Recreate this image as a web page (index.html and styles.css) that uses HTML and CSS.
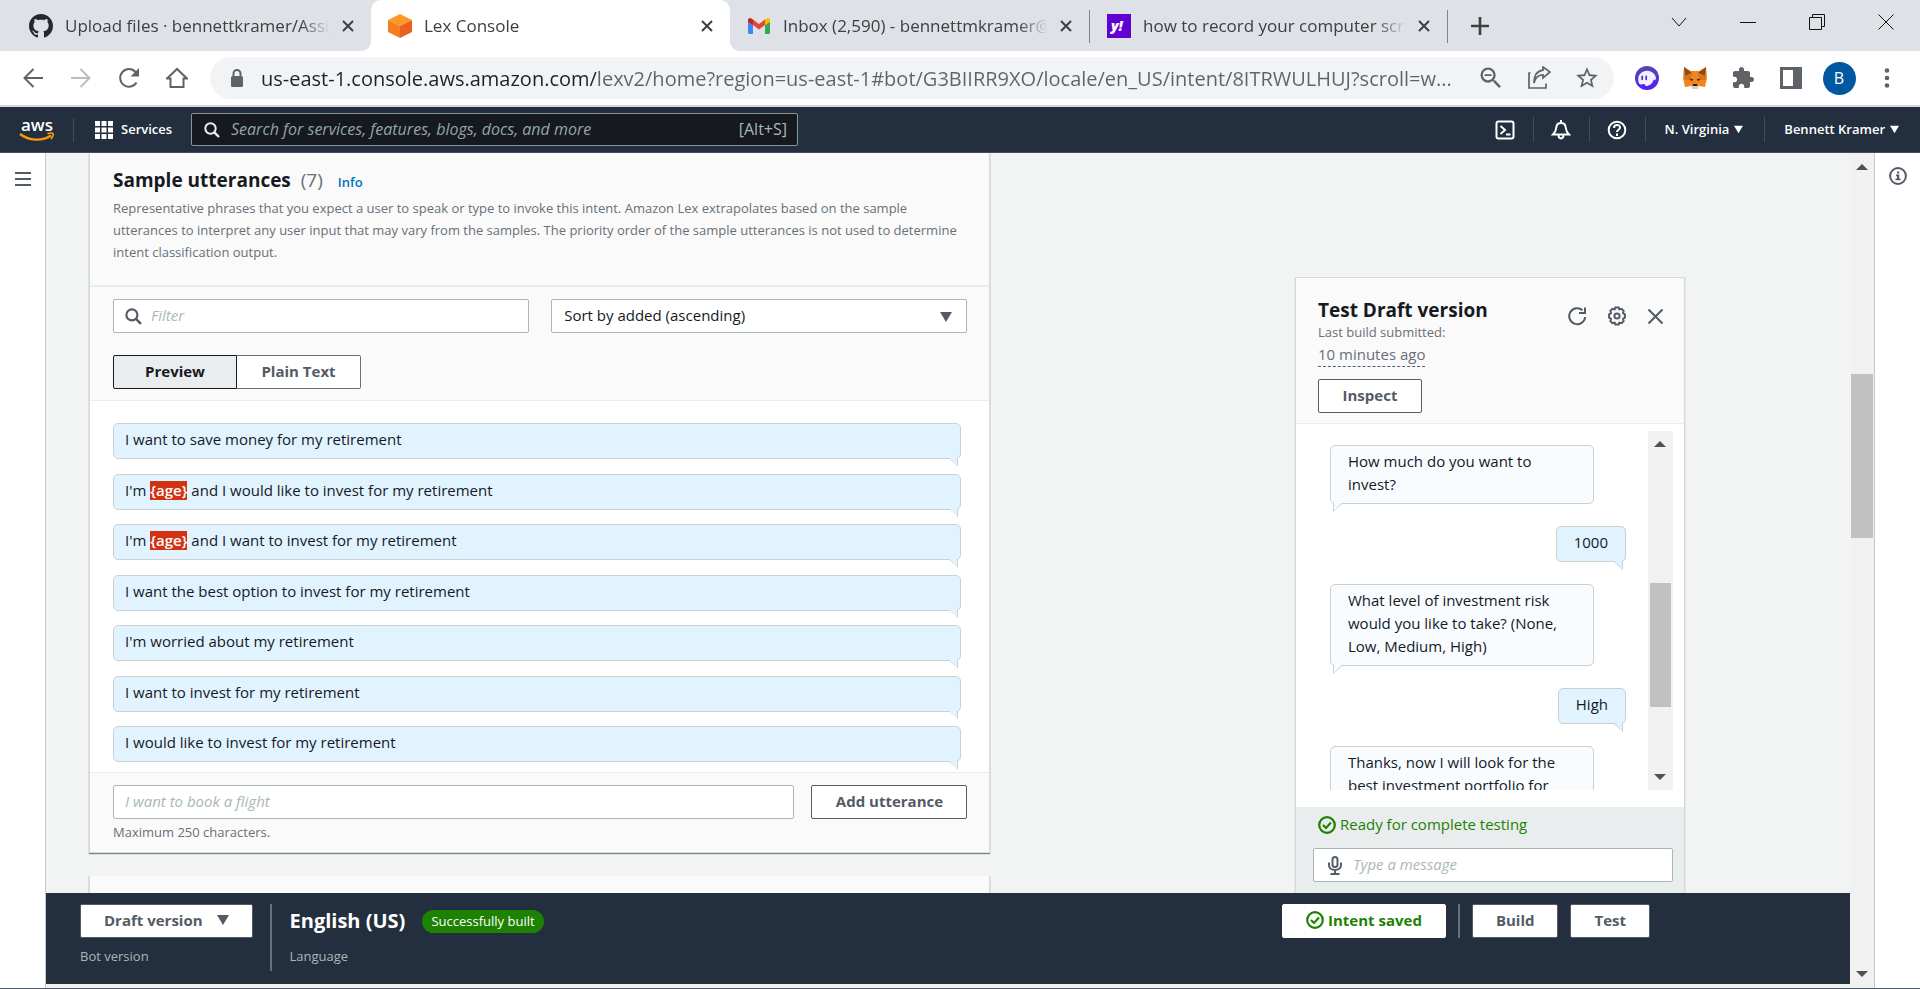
FILE: index.html
```html
<!DOCTYPE html>
<html lang="en">
<head>
<meta charset="utf-8">
<title>Lex Console</title>
<link rel="stylesheet" href="styles.css">
</head>
<body>
<svg class="defs" aria-hidden="true">
  <symbol id="i-close" viewBox="0 0 12 12"><path d="M1 1l10 10M11 1L1 11" fill="none" stroke="currentColor" stroke-width="2"/></symbol>
  <symbol id="i-x" viewBox="0 0 17 17"><path d="M1.500 1.500l14 14M15.500 1.500l-14 14" fill="none" stroke="currentColor" stroke-width="2"/></symbol>
  <symbol id="i-search" viewBox="0 0 16 16"><circle cx="6.5" cy="6.5" r="5.2" fill="none" stroke="currentColor" stroke-width="2"/><path d="M10.3 10.3L15 15" stroke="currentColor" stroke-width="2.4"/></symbol>
  <symbol id="i-caret" viewBox="0 0 12 10"><path d="M0 0h12L6 10z" fill="currentColor"/></symbol>
  <symbol id="i-scroll" viewBox="0 0 12 6"><path d="M0 6h12L6 0z" fill="#505050"/></symbol>
  <symbol id="i-check" viewBox="0 0 18 18"><circle cx="9" cy="9" r="7.8" fill="none" stroke="currentColor" stroke-width="2.2"/><path d="M5 9l3 3 5-5.4" fill="none" stroke="currentColor" stroke-width="2.2"/></symbol>
</svg>

<div class="window">
  <div class="tabstrip">
    <div class="tab">
      <svg class="favicon" viewBox="0 0 16 16"><path fill="#24292f" d="M8 0C3.58 0 0 3.58 0 8c0 3.54 2.29 6.53 5.47 7.59.4.07.55-.17.55-.38 0-.19-.01-.82-.01-1.49-2.01.37-2.53-.49-2.69-.94-.09-.23-.48-.94-.82-1.13-.28-.15-.68-.52-.01-.53.63-.01 1.08.58 1.23.82.72 1.21 1.87.87 2.33.66.07-.52.28-.87.51-1.07-1.78-.2-3.64-.89-3.64-3.95 0-.87.31-1.59.82-2.15-.08-.2-.36-1.02.08-2.12 0 0 .67-.21 2.2.82.64-.18 1.32-.27 2-.27.68 0 1.36.09 2 .27 1.53-1.04 2.2-.82 2.2-.82.44 1.1.16 1.92.08 2.12.51.56.82 1.27.82 2.15 0 3.07-1.87 3.75-3.65 3.95.29.25.54.73.54 1.48 0 1.07-.01 1.93-.01 2.2 0 .21.15.46.55.38A8.013 8.013 0 0016 8c0-4.42-3.58-8-8-8z"/></svg>
      <button class="tab-title">Upload files · bennettkramer/Assignment</button>
      <button class="tab-close" aria-label="Close tab"><svg><use href="#i-close"/></svg></button>
    </div>
    <div class="tab tab-active">
      <svg class="favicon" viewBox="0 0 24 24"><path fill="#fd9827" d="M12 0l12 6-12 6L0 6z"/><path fill="#f47d20" d="M0 6l12 6v12L0 18z"/><path fill="#e8601f" d="M24 6l-12 6v12l12-6z"/></svg>
      <button class="tab-title">Lex Console</button>
      <button class="tab-close" aria-label="Close tab"><svg><use href="#i-close"/></svg></button>
    </div>
    <div class="tab">
      <svg class="favicon" viewBox="0 0 24 24"><path fill="#4285f4" d="M1 7l5 4v9H2.500Q1 20 1 18.500z"/><path fill="#34a853" d="M23 7l-5 4v9h3.500q1.500 0 1.500-1.500z"/><path fill="#ea4335" d="M6 5.500l6 4.500 6-4.500V11l-6 4.500L6 11z"/><path fill="#c5221f" d="M1 8V6q0-2 2-2 1 0 3 1.500V11z"/><path fill="#fbbc04" d="M23 8V6q0-2-2-2-1 0-3 1.500V11z"/></svg>
      <button class="tab-title">Inbox (2,590) - bennettmkramer@gmail.com</button>
      <button class="tab-close" aria-label="Close tab"><svg><use href="#i-close"/></svg></button>
    </div>
    <div class="tab tab-ruled">
      <svg class="favicon" viewBox="0 0 24 24"><path fill="#5f01d1" d="M0 0h24v24H0z"/><text x="4" y="17" class="yahoo">y!</text></svg>
      <button class="tab-title">how to record your computer screen</button>
      <button class="tab-close" aria-label="Close tab"><svg><use href="#i-close"/></svg></button>
    </div>
    <button class="new-tab" aria-label="New tab"><svg width="18" height="18" viewBox="0 0 18 18"><path d="M9 0v18M0 9h18" stroke="#3c4043" stroke-width="2.600"/></svg></button>
    <div class="window-controls">
      <button aria-label="Search tabs"><svg width="16" height="10" viewBox="0 0 16 10"><path d="M1 1l7 8 7-8"/></svg></button>
      <button aria-label="Minimize"><svg width="16" height="16" viewBox="0 0 16 16"><path d="M0 8.500h16"/></svg></button>
      <button aria-label="Restore"><svg width="16" height="16" viewBox="0 0 16 16"><path d="M.5 3.500h12v12H.500zM3.500 3.500v-3h12v12h-3"/></svg></button>
      <button aria-label="Close"><svg width="16" height="16" viewBox="0 0 16 16"><path d="M.5.5l15 15M15.500.5l-15 15"/></svg></button>
    </div>
  </div>

  <div class="toolbar">
    <button class="tool" aria-label="Back"><svg width="20" height="20" viewBox="0 0 20 20"><path d="M20 10H2M10.500 1L1.500 10l9 9" class="line"/></svg></button>
    <button class="tool tool-off" aria-label="Forward"><svg width="20" height="20" viewBox="0 0 20 20"><path d="M0 10h18M9.500 1l9 9-9 9" class="line"/></svg></button>
    <button class="tool" aria-label="Reload"><svg width="22" height="22" viewBox="0 0 22 22"><path d="M18.500 15.500A8.800 8.800 0 1 1 17.500 5" class="line"/><path d="M21 1v8.500h-8.500z" fill="currentColor"/></svg></button>
    <button class="tool" aria-label="Home"><svg width="22" height="22" viewBox="0 0 22 22"><path d="M1 11.500L11 2l10 9.500h-3.500V20h-13v-8.500z" class="line"/></svg></button>
    <div class="omnibox">
      <svg width="18" height="20" viewBox="0 0 18 20"><rect x="3" y="8" width="12" height="11" rx="1.500" fill="#5f6368"/><path d="M5.500 8V5.500a3.500 3.500 0 0 1 7 0V8" fill="none" stroke="#5f6368" stroke-width="2"/></svg>
      <input class="url" type="text" aria-label="Address" value="us-east-1.console.aws.amazon.com/lexv2/home?region=us-east-1#bot/G3BIIRR9XO/locale/en_US/intent/8ITRWULHUJ?scroll=w...">
      <button class="tool" aria-label="Zoom"><svg width="28" height="28" viewBox="0 0 24 24"><path fill="currentColor" d="M15.500 14h-.79l-.28-.27A6.471 6.471 0 0016 9.500 6.500 6.500 0 109.500 16c1.610 0 3.090-.59 4.230-1.570l.27.28v.79l5 4.990L20.490 19l-4.990-5zm-6 0C7.010 14 5 11.990 5 9.500S7.010 5 9.500 5 14 7.010 14 9.500 11.990 14 9.500 14zM6.500 8.700h6v1.500h-6z"/></svg></button>
      <button class="tool" aria-label="Share"><svg width="24" height="24" viewBox="0 0 24 24"><path d="M3.500 7H2v15h17v-4.500M7 17c1-5.500 4-8 9-8.200V12l7-6-7-5v3.200C10 5 7 10 7 17z" fill="none" stroke="currentColor" stroke-width="1.700"/></svg></button>
      <button class="tool" aria-label="Bookmark"><svg width="26" height="26" viewBox="0 0 24 24"><path fill="currentColor" d="M22 9.240l-7.190-.62L12 2 9.190 8.630 2 9.240l5.460 4.730L5.820 21 12 17.270 18.180 21l-1.630-7.030L22 9.240zM12 15.400l-3.760 2.270 1-4.280-3.320-2.880 4.380-.38L12 6.100l1.710 4.040 4.380.38-3.320 2.880 1 4.280L12 15.400z"/></svg></button>
    </div>
    <button class="tool" aria-label="Phantom"><svg width="24" height="24" viewBox="0 0 24 24"><defs><linearGradient id="ph" x1="0" y1="0" x2="0" y2="1"><stop offset="0" stop-color="#534bb1"/><stop offset="1" stop-color="#551bf9"/></linearGradient></defs><circle cx="12" cy="12" r="12" fill="url(#ph)"/><path d="M3.200 13C3.200 8.500 7 4.800 12 4.800c5.200 0 9 3.700 9 8.200 0 1-1.800.4-2.600 1.200-.9 3.300-4.200 5.800-7.400 5.800-1.200 0-.8-1.800-2-1.900-1.400 0-2.400.9-3.900.2S3.200 15.500 3.200 13z" fill="#f3efff"/><path d="M7.200 10.300v3M11.200 10.300v3" stroke="#4e3ac6" stroke-width="1.800" stroke-linecap="round"/></svg></button>
    <button class="tool" aria-label="MetaMask"><svg width="24" height="24" viewBox="0 0 24 24"><path fill="#f5841f" d="M1 1l7 4h8l7-4 1 11-2 9-6-1-4 2-4-2-6 1-2-9z"/><path fill="#8a4a20" d="M1 1l8 6-7 3zM23 1l-8 6 7 3z"/><path fill="#d5761c" d="M2 10l7-3-2 7-6 0zM22 10l-7-3 2 7h6z"/><path fill="#e4c9b4" d="M8 19l4 1 4-1-1 4H9z"/><path fill="#222" d="M10 18h4l.5 2h-5zM6.500 12.500l4 1-2 1.500zM17.500 12.500l-4 1 2 1.500z"/></svg></button>
    <button class="tool" aria-label="Extensions"><svg width="24" height="24" viewBox="0 0 24 24"><path fill="currentColor" d="M20.500 11H19V7c0-1.100-.9-2-2-2h-4V3.500C13 2.120 11.880 1 10.500 1S8 2.120 8 3.500V5H4c-1.100 0-1.990.9-1.990 2v3.800H3.500c1.490 0 2.700 1.210 2.700 2.700s-1.210 2.700-2.700 2.700H2V20c0 1.100.9 2 2 2h3.800v-1.500c0-1.490 1.210-2.700 2.700-2.700 1.490 0 2.700 1.210 2.700 2.700V22H17c1.100 0 2-.9 2-2v-4h1.500c1.380 0 2.500-1.120 2.500-2.500S21.880 11 20.500 11z"/></svg></button>
    <button class="tool" aria-label="Side panel"><svg width="22" height="22" viewBox="0 0 22 22"><path fill="currentColor" fill-rule="evenodd" d="M0 0h22v22H0zM3 3v16h10V3z"/></svg></button>
    <button class="tool" aria-label="Profile"><span class="avatar">B</span></button>
    <button class="tool" aria-label="Menu"><svg width="6" height="20" viewBox="0 0 6 20"><circle cx="3" cy="2.500" r="2.300" fill="currentColor"/><circle cx="3" cy="10" r="2.300" fill="currentColor"/><circle cx="3" cy="17.500" r="2.300" fill="currentColor"/></svg></button>
  </div>

  <header class="aws-nav">
    <a class="aws-logo" href="#" aria-label="AWS home"><svg width="36" height="24" viewBox="0 0 36 24"><text x="18" y="13" text-anchor="middle" class="aws-word">aws</text><path d="M1 16c9 7 22 7.500 31 1.500" fill="none" stroke="#f90" stroke-width="2.400"/><path d="M28.500 15.800c2-1 5-1 5.500-.3s-.2 3.500-2 5.500" fill="none" stroke="#f90" stroke-width="1.700"/></svg></a>
    <button class="services"><svg width="18" height="18" viewBox="0 0 18 18"><path fill="#fff" d="M0 0h5v5H0zM6.500 0h5v5h-5zM13 0h5v5h-5zM0 6.500h5v5H0zM6.500 6.500h5v5h-5zM13 6.500h5v5h-5zM0 13h5v5H0zM6.500 13h5v5h-5zM13 13h5v5h-5z"/></svg>Services</button>
    <label class="aws-search"><svg width="16" height="16"><use href="#i-search"/></svg><input type="search" aria-label="Search AWS" placeholder="Search for services, features, blogs, docs, and more"><span>[Alt+S]</span></label>
    <nav class="aws-links">
      <button class="aws-icon" aria-label="CloudShell"><svg width="20" height="20" viewBox="0 0 20 20"><rect x="1.500" y="1.500" width="17" height="17" rx="2" /><path d="M5.500 6l4.500 4-4.500 4M11 14.500h4.500"/></svg></button>
      <button class="aws-icon" aria-label="Notifications"><svg width="20" height="20" viewBox="0 0 20 20"><path d="M2 14.500c2.500-2.500 3-4 3.300-7C5.500 4.500 7.500 3 10 3s4.500 1.500 4.700 4.500c.3 3 .8 4.500 3.300 7zM10 3V0M7.500 15c0 4.500 5 4.500 5 0"/></svg></button>
      <button class="aws-icon" aria-label="Help"><svg width="20" height="20" viewBox="0 0 20 20"><circle cx="10" cy="10" r="8.300"/><path d="M7 8c0-4 6-4 6-.5 0 2.200-3 2.300-3 4.500M10 13.500V16"/></svg></button>
      <button class="aws-menu">N. Virginia<svg width="9" height="9"><use href="#i-caret"/></svg></button>
      <button class="aws-menu">Bennett Kramer<svg width="9" height="9"><use href="#i-caret"/></svg></button>
    </nav>
  </header>

  <div class="console">
    <aside class="rail"><button aria-label="Open navigation"><svg width="16" height="14" viewBox="0 0 16 14"><path d="M0 1h16M0 7h16M0 13h16" stroke="#545b64" stroke-width="2"/></svg></button></aside>

    <div class="center">
      <main class="workspace">
        <div class="column">
          <section class="card">
            <div class="card-head">
              <h2>Sample utterances <span class="count">(7)</span> <a href="#">Info</a></h2>
              <p>Representative phrases that you expect a user to speak or type to invoke this intent. Amazon Lex extrapolates based on the sample utterances to interpret any user input that may vary from the samples. The priority order of the sample utterances is not used to determine intent classification output.</p>
            </div>
            <div class="filters">
              <label class="field"><svg width="17" height="17"><use href="#i-search"/></svg><input type="text" aria-label="Filter" placeholder="Filter"></label>
              <div class="select"><select aria-label="Sort order"><option>Sort by added (ascending)</option></select><svg width="12" height="10"><use href="#i-caret"/></svg></div>
              <div class="segments"><button class="seg seg-on">Preview</button><button class="seg">Plain Text</button></div>
            </div>
            <ul class="utterances">
              <li>I want to save money for my retirement</li>
              <li>I'm <mark>{age}</mark> and I would like to invest for my retirement</li>
              <li>I'm <mark>{age}</mark> and I want to invest for my retirement</li>
              <li>I want the best option to invest for my retirement</li>
              <li>I'm worried about my retirement</li>
              <li>I want to invest for my retirement</li>
              <li>I would like to invest for my retirement</li>
            </ul>
            <div class="card-foot">
              <div class="add-row"><label class="field"><input type="text" aria-label="New utterance" placeholder="I want to book a flight"></label><button class="btn btn-add">Add utterance</button></div>
              <small>Maximum 250 characters.</small>
            </div>
          </section>
          <section class="card card-next"></section>
        </div>

        <section class="chat">
          <div class="chat-head">
            <div class="chat-top">
              <h2>Test Draft version</h2>
              <div class="chat-tools">
                <button aria-label="Refresh"><svg width="20" height="20" viewBox="0 0 20 20"><path d="M18.200 11A8 8 0 1 1 15.500 4.200" class="line"/><path d="M18 1.500v5.500h-6" class="line"/></svg></button>
                <button aria-label="Settings"><svg width="20" height="20" viewBox="0 0 20 20"><path d="M8.300 1.500h3.400l.6 1.900 2.300-.6 2 2-.6 2.300 1.900 1.200v3.400l-1.900 1.200.6 2.300-2 2-2.300-.6-.6 1.900H8.300l-.6-1.900-2.300.6-2-2 .6-2.300-1.900-1.200V8.300L4 7.100l-.6-2.300 2-2 2.300.6z" class="line"/><circle cx="10" cy="10" r="2.600" class="line"/></svg></button>
                <button aria-label="Close"><svg width="17" height="17"><use href="#i-x"/></svg></button>
              </div>
            </div>
            <p class="built">Last build submitted:</p>
            <p><span class="ago">10 minutes ago</span></p>
            <button class="btn btn-inspect">Inspect</button>
          </div>
          <div class="chat-body">
            <div class="messages">
              <p class="msg">How much do you want to invest?</p>
              <p class="msg msg-user">1000</p>
              <p class="msg">What level of investment risk would you like to take? (None, Low, Medium, High)</p>
              <p class="msg msg-user">High</p>
              <p class="msg">Thanks, now I will look for the best investment portfolio for</p>
            </div>
            <div class="scrollbar"><svg width="12" height="6"><use href="#i-scroll"/></svg><i class="thumb"></i><svg class="down" width="12" height="6"><use href="#i-scroll"/></svg></div>
          </div>
          <div class="chat-foot">
            <p class="ready"><svg width="18" height="18"><use href="#i-check"/></svg>Ready for complete testing</p>
            <label class="field"><svg width="14" height="19" viewBox="0 0 14 19"><rect x="4.500" y="1" width="5" height="10" rx="2.500" fill="none" stroke="currentColor" stroke-width="2"/><path d="M1 6.500V9c0 6.500 12 6.500 12 0V6.500M7 14v4M2.500 18h9" fill="none" stroke="currentColor" stroke-width="2"/></svg><input type="text" aria-label="Message" placeholder="Type a message"></label>
          </div>
        </section>
      </main>

      <footer class="botbar">
        <div class="bot-version"><button class="btn">Draft version<svg width="12" height="10"><use href="#i-caret"/></svg></button><small>Bot version</small></div>
        <div class="bot-lang"><div class="lang-row"><strong>English (US)</strong><span class="badge">Successfully built</span></div><small>Language</small></div>
        <div class="bot-actions">
          <button class="btn btn-saved"><svg width="18" height="18"><use href="#i-check"/></svg>Intent saved</button>
          <i class="rule"></i>
          <button class="btn">Build</button>
          <button class="btn">Test</button>
        </div>
      </footer>
    </div>

    <div class="scrollbar scrollbar-page"><svg width="12" height="6"><use href="#i-scroll"/></svg><i class="thumb"></i><svg class="down" width="12" height="6"><use href="#i-scroll"/></svg></div>
    <aside class="help"><button aria-label="Info"><svg width="18" height="18" viewBox="0 0 18 18"><circle cx="9" cy="9" r="7.900" fill="none" stroke="#545b64" stroke-width="2"/><path d="M8 4.500h2.200v2H8zM7 7.500h3.200v4h1.300v1.800H6.500v-1.800H8V9.200H7z" fill="#545b64"/></svg></button></aside>
  </div>
</div>
</body>
</html>
```
FILE: styles.css
```css
* { box-sizing: border-box; }
body {
  margin: 0;
  font: 15px/23px "Open Sans", "Noto Sans", sans-serif;
  color: #16191f;
}
button, input, select { font: inherit; color: inherit; }
button { border: 0; padding: 0; background: none; cursor: pointer; }
h2, p, ul { margin: 0; padding: 0; }
svg { display: block; flex: none; }
.defs { position: absolute; width: 0; height: 0; }
.line { fill: none; stroke: currentColor; stroke-width: 2; }

.window { display: flex; flex-direction: column; height: 100vh; overflow: hidden; }

/* Browser tabs */
.tabstrip { display: flex; flex: none; height: 51px; padding-left: 12px; background: #dee1e6; color: #3c4043; }
.tab { display: flex; align-items: center; flex: 0 1 359px; min-width: 0; padding: 0 13px 0 17px; }
.tab-active { position: relative; background: #fff; border-radius: 10px 10px 0 0; }
.tab-active::before, .tab-active::after {
  content: ""; position: absolute; bottom: 0; width: 10px; height: 10px;
}
.tab-active::before { right: 100%; background: radial-gradient(circle at 0 0, transparent 10px, #fff 10px); }
.tab-active::after { left: 100%; background: radial-gradient(circle at 100% 0, transparent 10px, #fff 10px); }
.tab-ruled { border: solid #80868b; border-width: 0 1px; border-image: linear-gradient(transparent 11px, #80868b 11px, #80868b 42px, transparent 42px) 1; }
.favicon { width: 24px; height: 24px; }
.yahoo { font: italic 800 14px "Open Sans", sans-serif; fill: #fff; }
.tab-title {
  flex: 1; min-width: 0; margin-left: 12px; overflow: hidden; white-space: nowrap; text-align: left;
  font-size: 17px;
  mask-image: linear-gradient(to left, transparent, #000 30px);
}
.tab-close { display: grid; place-items: center; width: 20px; height: 20px; margin-left: 8px; }
.tab-close svg { width: 12px; height: 12px; }
.new-tab { display: grid; place-items: center; width: 64px; }
.window-controls { display: flex; margin-left: auto; }
.window-controls button { display: grid; place-items: center; width: 69px; height: 43px; }
.window-controls path { fill: none; stroke: #111; }

/* Browser toolbar */
.toolbar { display: flex; align-items: center; flex: none; height: 56px; padding: 0 9px; border-bottom: 2px solid #d6d8da; background: #fff; }
.tool { display: grid; place-items: center; flex: none; width: 48px; height: 40px; color: #5f6368; }
.tool-off { color: #babcbe; }
.omnibox { display: flex; align-items: center; flex: 1; min-width: 0; height: 42px; margin: 0 9px; padding: 0 3px 0 18px; border-radius: 21px; background: #f1f3f4; }
.url {
  flex: 1; min-width: 0; height: 40px; margin-left: 15px; border: 0; padding: 0; outline: 0;
  font-size: 20px;
  background: linear-gradient(to right, #202124 335px, #5f6368 335px);
  -webkit-background-clip: text; background-clip: text; -webkit-text-fill-color: transparent;
}
.avatar { display: grid; place-items: center; width: 33px; height: 33px; border-radius: 50%; background: #0158a0; color: #fff; font-size: 16px; }

/* AWS navigation */
.aws-nav { display: flex; align-items: center; flex: none; height: 46px; padding-left: 19px; border-bottom: 1px solid #414d5c; background: #232f3e; color: #fff; font-size: 13px; font-weight: 600; }
.aws-logo { padding-right: 18px; border-right: 1px solid #414d5c; }
.aws-word { font: 600 17px "Open Sans", sans-serif; fill: #fff; }
.services { display: flex; align-items: center; gap: 8px; width: 96px; margin-left: 21px; }
.aws-search { display: flex; align-items: center; flex: 0 1 607px; height: 33px; padding: 0 10px 0 12px; border: 1px solid #879596; border-radius: 2px; background: #16191f; font-size: 16px; font-weight: 400; color: #aab7b8; }
.aws-search svg { color: #eaeded; }
.aws-search input { flex: 1; min-width: 0; margin-left: 11px; padding: 0; border: 0; outline: 0; background: none; }
::placeholder { color: #aab7b8; font-style: italic; opacity: 1; }
.aws-search ::placeholder { color: #95a5a6; }
.aws-links { display: flex; margin-left: auto; }
.aws-links button { display: flex; align-items: center; height: 25px; }
.aws-icon { justify-content: center; width: 56px; }
.aws-icon svg { fill: none; stroke: #fff; stroke-width: 2; }
.aws-links button + button { border-left: 1px solid #414d5c; }
.aws-menu { gap: 5px; padding: 0 21px 0 19px; }

/* Console frame */
.console { display: flex; flex: 1; min-height: 0; border-bottom: 1px solid #545b64; }
.rail, .help { flex: none; width: 46px; background: #fff; }
.rail { border-right: 1px solid #c6c9cc; padding: 16px 15px; }
.help { border-left: 1px solid #c6c9cc; padding: 14px; }
.center { display: flex; flex-direction: column; flex: 1; min-width: 0; padding-bottom: 4px; background: #f1f1f1; }
.workspace {
  display: grid; grid-template: minmax(0, 1fr) / 74fr 25fr 390px; flex: 1; min-height: 0;
  padding: 0 165px 0 43px; overflow: hidden; background: #f2f3f3;
}
.scrollbar { display: flex; flex-direction: column; align-items: center; flex: none; width: 25px; padding: 10px 2px; background: #f1f1f1; }
.scrollbar .thumb { width: 100%; height: 124px; margin-top: 136px; background: #c1c1c1; }
.scrollbar .down { margin-top: auto; transform: rotate(180deg); }
.scrollbar-page { width: 24px; padding: 11px 1px; }
.scrollbar-page .thumb { height: 164px; margin-top: 204px; }

/* Sample utterances */
.card { border: 1px solid #d5dbdb; border-top: 0; background: #fafafa; box-shadow: 0 1px 1px rgba(0, 28, 36, .5); }
.card-head { padding: 15px 22px 22px 23px; border-bottom: 2px solid #eaeded; }
h2 { font-size: 19px; line-height: 24px; font-weight: 700; }
.card-head .count { margin: 0 10px 0 5px; font-weight: 400; color: #687078; }
.card-head a { font-size: 13px; font-weight: 600; color: #0073bb; text-decoration: none; }
.card-head p { margin-top: 3px; font-size: 13px; color: #687078; line-height: 22px; }
small { font-size: 13px; line-height: 20px; color: #687078; }
.filters { display: grid; grid-template-columns: 1fr 1fr; gap: 22px; padding: 12px 22px 11px 23px; border-bottom: 1px solid #eaeded; }
.field { display: flex; align-items: center; gap: 9px; height: 34px; padding: 0 11px; border: 1px solid #aab7b8; border-radius: 2px; background: #fff; color: #545b64; }
.field input { flex: 1; min-width: 0; padding: 0 0 2px; border: 0; outline: 0; background: none; }
.select { position: relative; }
.select select { width: 100%; height: 34px; padding: 0 12px 2px; border: 1px solid #aab7b8; border-radius: 2px; background: #fff; appearance: none; }
.select svg { position: absolute; right: 15px; top: 13px; color: #545b64; pointer-events: none; }
.segments { display: flex; }
.seg { width: 124px; height: 34px; padding-bottom: 2px; border: 1px solid #687078; border-radius: 0 2px 2px 0; background: #fff; color: #545b64; font-weight: 700; }
.seg-on { border-color: #16191f; border-radius: 2px 0 0 2px; background: #eaeded; color: #16191f; }
.seg + .seg { border-left: 0; }
.utterances { display: flex; flex-direction: column; justify-content: space-between; min-height: 371px; padding: 22px 28px 10px 23px; list-style: none; background: #fff; }
.utterances li, .msg { position: relative; padding: 4px 11px 7px; border: 1px solid #ccd0d3; border-radius: 5px; background: #e1f3ff; }
.utterances mark { display: inline-block; line-height: 19px; background: #d13212; color: #fff; font-weight: 600; }
.utterances li::after, .msg::after {
  content: ""; position: absolute; right: 2px; bottom: -9px; width: 9px; height: 9px;
  background: linear-gradient(to top right, transparent 48%, #ccd0d3 48%, #ccd0d3 58%, #e1f3ff 58%);
  border-right: 1px solid #ccd0d3;
  clip-path: polygon(0 0, 100% 0, 100% 100%);
}
.card-foot { padding: 12px 22px 9px 23px; border-top: 1px solid #eaeded; }
.add-row { display: flex; gap: 17px; margin-bottom: 1px; }
.add-row .field { flex: 1; }
.btn { display: flex; align-items: center; justify-content: center; gap: 14px; height: 34px; padding: 0 23px 2px; border: 1px solid #545b64; border-radius: 2px; background: #fff; color: #545b64; font-weight: 700; white-space: nowrap; }
.btn-add { width: 156px; }
.card-next { height: 60px; margin-top: 23px; }

/* Test chat */
.chat { display: flex; flex-direction: column; grid-column: 3; min-height: 0; margin-top: 124px; border: 1px solid #d5dbdb; border-bottom: 0; background: #fff; box-shadow: 0 1px 1px rgba(0, 28, 36, .3); }
.chat-head { padding: 20px 20px 10px 22px; border-bottom: 1px solid #eaeded; background: #fafafa; color: #687078; }
.chat h2 { color: #16191f; }
.chat-top { display: flex; justify-content: space-between; height: 24px; }
.chat-tools { display: flex; gap: 20px; padding-top: 8px; color: #545b64; }
.chat-tools button { display: grid; place-items: center; height: 20px; }
.built { font-size: 13px; line-height: 20px; }
.ago { display: inline-block; line-height: 24px; border-bottom: 1px dashed #545b64; }
.btn-inspect { width: 104px; margin-top: 12px; }
.chat-body { display: flex; flex: 1; min-height: 0; margin: 7px 11px 17px 34px; }
.messages { display: flex; flex-direction: column; align-items: flex-start; flex: 1; gap: 22px; padding: 14px 22px 0 0; overflow: hidden; }
.msg { flex: none; width: 264px; padding: 4px 17px 7px; background: #f8fcff; }
.msg-user { align-self: flex-end; width: auto; background: #e1f3ff; }
.msg::after { right: auto; left: 2px; border: 0; border-left: 1px solid #ccd0d3; background: linear-gradient(to top left, transparent 48%, #ccd0d3 48%, #ccd0d3 58%, #f8fcff 58%); clip-path: polygon(0 0, 100% 0, 0 100%); }
.msg-user::after { left: auto; right: 2px; border: 0; border-right: 1px solid #ccd0d3; background: linear-gradient(to top right, transparent 48%, #ccd0d3 48%, #ccd0d3 58%, #e1f3ff 58%); clip-path: polygon(0 0, 100% 0, 100% 100%); }
.chat-foot { padding: 6px 11px 11px 17px; background: #eaeded; }
.ready { display: flex; align-items: center; gap: 4px; margin: 0 0 12px 5px; color: #1d8102; }
.chat-foot .field { gap: 11px; padding: 0 14px; }

/* Bottom bar */
.botbar { display: flex; flex: none; height: 91px; padding: 11px 200px 13px 34px; background: #232f3e; }
.botbar small { color: #aab7b8; }
.bot-version { display: flex; flex-direction: column; gap: 8px; padding-right: 17px; border-right: 2px solid #687078; }
.bot-lang { display: flex; flex-direction: column; gap: 8px; margin-left: 18px; }
.lang-row { display: flex; align-items: center; gap: 17px; height: 34px; color: #fff; }
.lang-row strong { padding-bottom: 2px; font-size: 20px; font-weight: 700; }
.badge { padding: 0 9px; border-radius: 12px; background: #1d8102; font-size: 13px; line-height: 23px; }
.bot-actions { display: flex; align-items: flex-start; gap: 12px; margin-left: auto; }
.btn-saved.btn { gap: 4px; color: #1d8102; border-color: #fff; }
.rule { width: 2px; height: 34px; background: #687078; }
```
